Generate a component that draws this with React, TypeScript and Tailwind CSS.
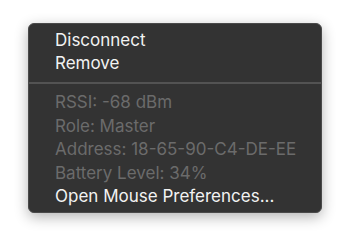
const items = [
  { label: 'RSSI: -68 dBm', disabled: true },
  { label: 'Role: Master', disabled: true },
  { label: 'Address: 18-65-90-C4-DE-EE', disabled: true },
  { label: 'Battery Level: 34%', disabled: true },
  { label: 'Open Mouse Preferences...', disabled: false },
]

export default function App() {
  return (
    <div
      className="w-[350px] h-[247px] bg-white pt-[23px] pl-[28px]"
      style={{ fontFamily: 'Inter, "Liberation Sans", Arial, sans-serif' }}
    >
      <div className="w-[294px] h-[190px] rounded-[6px] bg-[#333333] border border-[#4a4a4a] shadow-[0_4px_14px_rgba(0,0,0,0.3)] pt-[5px] text-[17px] leading-[23px]">
        <div className="pl-[26px] text-[#f2f2f2]">Disconnect</div>
        <div className="pl-[26px] text-[#f2f2f2]">Remove</div>
        <div className="mt-[7px] mb-[7px] h-[2px] bg-[#535353]" />
        {items.map((item) => (
          <div
            key={item.label}
            className={
              item.disabled
                ? 'pl-[26px] leading-[23.5px] text-[#6b6b6b]'
                : 'pl-[26px] leading-[23.5px] text-[#f2f2f2]'
            }
          >
            {item.label}
          </div>
        ))}
      </div>
    </div>
  )
}
